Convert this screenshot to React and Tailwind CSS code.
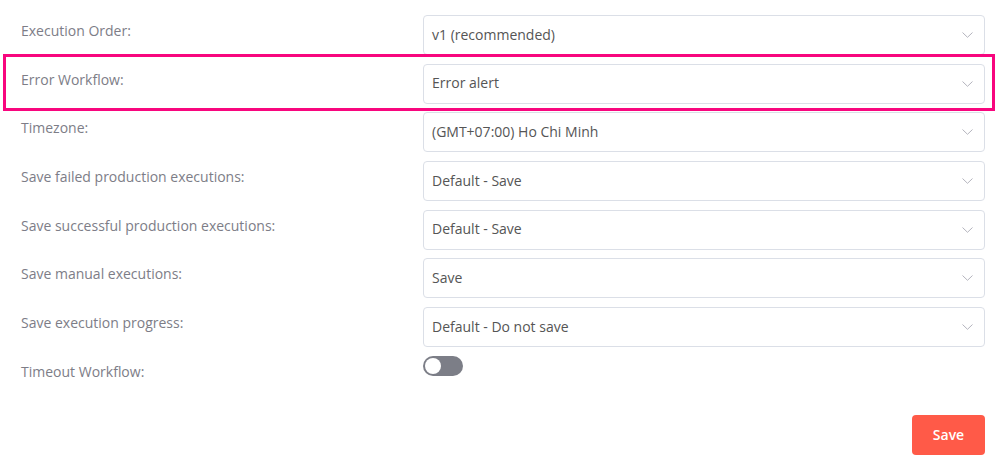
import React from "react";

const rows = [
  ["Execution Order:", "v1 (recommended)"],
  ["Error Workflow:", "Error alert"],
  ["Timezone:", "(GMT+07:00) Ho Chi Minh"],
  ["Save failed production executions:", "Default - Save"],
  ["Save successful production executions:", "Default - Save"],
  ["Save manual executions:", "Save"],
  ["Save execution progress:", "Default - Do not save"],
];

function Chevron() {
  return (
    <svg width="11" height="6" viewBox="0 0 11 6" fill="none" className="shrink-0">
      <path d="M0.5 0.5 L5.5 5.3 L10.5 0.5" stroke="#b4b4bd" strokeWidth="1" />
    </svg>
  );
}

export default function App() {
  return (
    <div
      className="relative w-[1002px] h-[476px] bg-white"
      style={{ fontFamily: '"Open Sans", "Liberation Sans", sans-serif' }}
    >
      <div className="flex flex-col pl-[21px] pr-[17px] pt-[15px] gap-[8.7px]">
        {rows.map(([label, value]) => (
          <div key={label} className="flex items-start">
            <div className="w-[402px] pt-[6px] text-[14px] leading-[20px] text-[#7d7d87]">
              {label}
            </div>
            <div className="flex-1 h-[40px] flex items-center justify-between rounded-[4px] border border-[#dbdfe7] pl-[8px] pr-[11px]">
              <span className="text-[14px] leading-[20px] text-[#555555] -mt-[1px]">{value}</span>
              <Chevron />
            </div>
          </div>
        ))}
        <div className="flex items-start">
          <div className="w-[402px] pt-[6px] text-[14px] leading-[20px] text-[#7d7d87]">
            Timeout Workflow:
          </div>
          <div className="w-[40px] h-[20px] rounded-full bg-[#7c7e87] flex items-center pl-[2px]">
            <div className="w-[16px] h-[16px] rounded-full bg-white" />
          </div>
        </div>
        <div className="flex justify-end pt-[30px] -mt-[6px]">
          <button className="w-[73px] h-[40px] rounded-[4px] bg-[#ff5a48] text-white text-[14px] font-semibold">
            Save
          </button>
        </div>
      </div>
      <div className="absolute left-[3px] top-[54px] w-[992px] h-[57px] border-[3px] border-[#f8067e] pointer-events-none" />
    </div>
  );
}
